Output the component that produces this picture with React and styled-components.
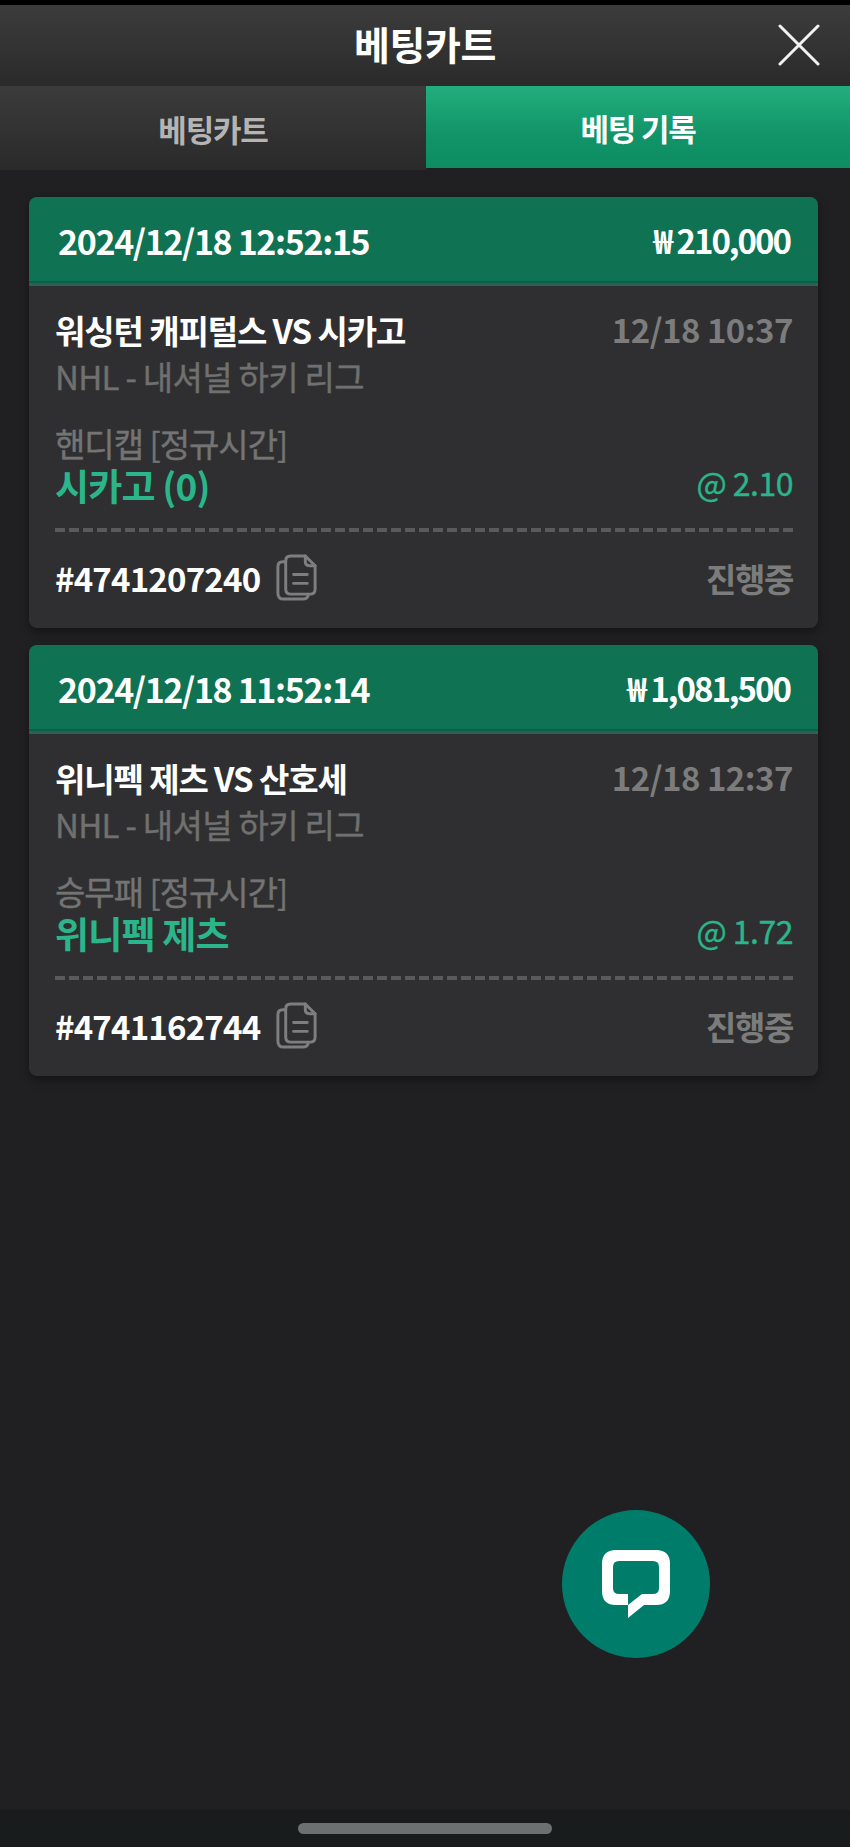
import React from 'react';
import styled, { createGlobalStyle } from 'styled-components';

const Global = createGlobalStyle`
  html, body { margin: 0; padding: 0; background: #1f1e20; }
  * { box-sizing: border-box; }
`;
const Page = styled.div`
  position: relative; width: 850px; height: 1847px; display: flex; flex-direction: column;
  background: #201f21; color: #fff; overflow: hidden;
  font-family: "Noto Sans CJK KR", "Noto Sans", sans-serif;
`;
const StatusStrip = styled.div`height: 5px; background: #000; flex: none;`;
const Header = styled.header`
  height: 81px; flex: none; display: flex; align-items: center; justify-content: center; position: relative;
  background: linear-gradient(#3c3c3c, #2a2a2a);
`;
const Title = styled.h1`margin: -5px 0 0; font-size: 39px; font-weight: 700; letter-spacing: -.4px; line-height: 1; color: #fff;`;
const CloseButton = styled.button`
  position: absolute; right: 30px; top: 19px; width: 42px; height: 42px; padding: 0; border: 0; background: none; display: block;
`;
const Tabs = styled.nav`height: 82px; flex: none; display: grid; grid-template-columns: 426px 424px; background: #1d1d1d;`;
const Tab = styled.div`
  display: flex; align-items: center; justify-content: center; font-size: 31px; font-weight: 700; letter-spacing: -1.2px;
  height: ${p => (p.$active ? '82px' : '84px')};
  color: ${p => (p.$active ? '#fff' : '#b4b4b4')};
  background: ${p => (p.$active ? 'linear-gradient(#23ae7e, #119468 60%, #0f8c62)' : 'linear-gradient(#3b3b3b, #2a2a2a)')};
`;
const List = styled.main`display: flex; flex-direction: column; gap: 17px; padding: 29px 32px 0 29px;`;
const Card = styled.article`
  height: 431px; border-radius: 8px; overflow: hidden; background: #2f2f31; display: flex; flex-direction: column;
  box-shadow: 0 4px 10px rgba(0,0,0,.35);
`;
const CardHead = styled.div`
  height: 89px; flex: none; padding: 0 28px 0 29px; display: flex; align-items: center; justify-content: space-between;
  background: #0e7253; border-bottom: 3px solid #2e5f52; box-shadow: inset 0 -2px 0 #0b5f46; color: #fff;
`;
const Placed = styled.span`font-size: 34px; font-weight: 700; letter-spacing: -1.35px;`;
const Amount = styled.span`font-size: 33px; font-weight: 700; letter-spacing: -2px;`;
const CardBody = styled.div`padding: 0 25px 0 26px; display: flex; flex-direction: column; flex: 1;`;
const Row = styled.div`display: flex; justify-content: space-between; align-items: center;`;
const MatchRow = styled(Row)`margin-top: 23px; height: 42px;`;
const Match = styled.div`font-size: 33px; font-weight: 700; letter-spacing: -1.1px; color: #fff;`;
const Time = styled.div`font-size: 33px; font-weight: 700; letter-spacing: -.5px; color: #7c7c7c; margin-top: -2px;`;
const League = styled.div`margin-top: 5px; height: 40px; line-height: 40px; font-size: 33px; font-weight: 400; letter-spacing: -.7px; color: #707070; -webkit-text-stroke: .4px #707070;`;
const Market = styled.div`margin-top: 28px; height: 38px; line-height: 38px; font-size: 33px; font-weight: 400; letter-spacing: -1px; color: #747474; -webkit-text-stroke: .4px #747474;`;
const PickRow = styled(Row)`height: 40px; margin-top: 3px;`;
const Pick = styled.div`font-size: 37px; line-height: 40px; font-weight: 700; letter-spacing: -.8px; color: #2bb58a;`;
const Odds = styled.div`font-size: 32px; line-height: 40px; font-weight: 400; letter-spacing: -.5px; color: #2bb58a; -webkit-text-stroke: .4px #2bb58a; margin-top: -6px;`;
const Divider = styled.div`
  margin-top: 23px; height: 4px;
  background: repeating-linear-gradient(90deg, #5a5a5a 0 10px, transparent 10px 14px);
`;
const FooterRow = styled(Row)`margin-top: 21px; height: 50px;`;
const TicketGroup = styled.div`display: flex; align-items: center; gap: 15px;`;
const Ticket = styled.div`font-size: 33px; font-weight: 700; letter-spacing: -.8px; color: #fff;`;
const Status = styled.div`font-size: 33px; font-weight: 700; letter-spacing: -1.4px; color: #7c7c7c;`;
const CopyIcon = styled.svg`display: block; width: 43px; height: 47px; margin-bottom: 2px;`;
const ChatFab = styled.button`
  position: absolute; left: 562px; top: 1510px; width: 148px; height: 148px; padding: 0; border: 0; border-radius: 50%;
  background: #007c6b; display: flex; align-items: center; justify-content: center;
`;
const BottomBar = styled.div`
  margin-top: auto; height: 37px; flex: none; background: #191c1c; display: flex; align-items: center; justify-content: center;
`;
const Handle = styled.div`width: 254px; height: 11px; border-radius: 6px; background: #6c7070; margin-left: -1px;`;

const Copy = () => (
  <CopyIcon viewBox="0 0 42 48" fill="none" stroke="#7e7e7e" strokeWidth="3" strokeLinejoin="round" strokeLinecap="round">
    <path d="M10 8 H7 Q2 8 2 13 V40 Q2 46 8 46 H27 Q33 46 33 41" />
    <path d="M10 7 Q10 2 15 2 H30 L40 12 V36 Q40 41 35 41 H15 Q10 41 10 36 Z" />
    <path d="M30 2 V8 Q30 12 34 12 H40" />
    <path d="M18 21 H32 M18 30 H32" />
  </CopyIcon>
);

const bets = [
  { placed: '2024/12/18 12:52:15', amount: '₩ 210,000', match: '워싱턴 캐피털스 VS 시카고', time: '12/18 10:37', market: '핸디캡 [정규시간]', pick: '시카고 (0)', odds: '@ 2.10', id: '#4741207240' },
  { placed: '2024/12/18 11:52:14', amount: '₩ 1,081,500', match: '위니펙 제츠 VS 산호세', time: '12/18 12:37', market: '승무패 [정규시간]', pick: '위니펙 제츠', odds: '@ 1.72', id: '#4741162744' },
];

export default function App() {
  return (
    <Page>
      <Global />
      <StatusStrip />
      <Header>
        <Title>베팅카트</Title>
        <CloseButton aria-label="닫기">
          <svg width="42" height="42" viewBox="0 0 42 42" fill="none" stroke="#f2f2f2" strokeWidth="3" strokeLinecap="round">
            <path d="M2 2 L40 40 M40 2 L2 40" />
          </svg>
        </CloseButton>
      </Header>
      <Tabs>
        <Tab>베팅카트</Tab>
        <Tab $active>베팅 기록</Tab>
      </Tabs>
      <List>
        {bets.map(b => (
          <Card key={b.id}>
            <CardHead><Placed>{b.placed}</Placed><Amount>{b.amount}</Amount></CardHead>
            <CardBody>
              <MatchRow><Match>{b.match}</Match><Time>{b.time}</Time></MatchRow>
              <League>NHL - 내셔널 하키 리그</League>
              <Market>{b.market}</Market>
              <PickRow><Pick>{b.pick}</Pick><Odds>{b.odds}</Odds></PickRow>
              <Divider />
              <FooterRow>
                <TicketGroup><Ticket>{b.id}</Ticket><Copy /></TicketGroup>
                <Status>진행중</Status>
              </FooterRow>
            </CardBody>
          </Card>
        ))}
      </List>
      <ChatFab aria-label="채팅">
        <svg width="70" height="70" viewBox="0 0 70 70">
          <path fill="#fff" fillRule="evenodd" d="M15 1 H55 Q69 1 69 15 V42 Q69 56 55 56 H43 L27 69 V56 H15 Q1 56 1 42 V15 Q1 1 15 1 Z M18 12 Q12 12 12 18 V39 Q12 45 18 45 H27 V56 L41 45 H52 Q58 45 58 39 V18 Q58 12 52 12 Z" />
        </svg>
      </ChatFab>
      <BottomBar><Handle /></BottomBar>
    </Page>
  );
}
